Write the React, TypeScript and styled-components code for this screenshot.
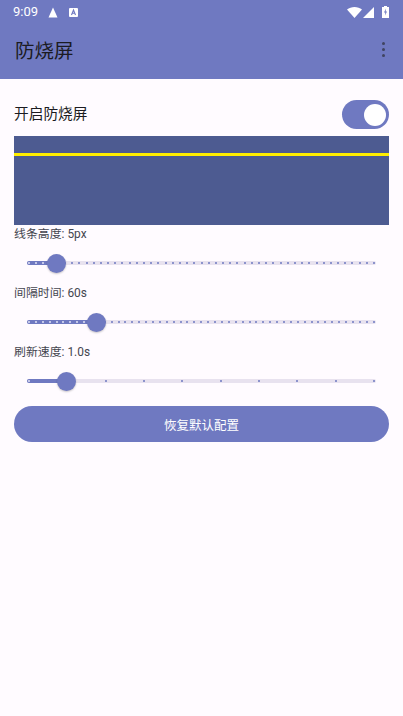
import React from 'react';
import styled, { createGlobalStyle } from 'styled-components';

const FONT = `Roboto, "Noto Sans CJK SC", sans-serif`;

const GlobalStyle = createGlobalStyle`
  html, body {
    margin: 0;
    padding: 0;
    background: #fffbff;
    font-family: ${FONT};
  }
  * { box-sizing: border-box; }
`;

const Page = styled.div`
  width: 403px;
  height: 716px;
  overflow: hidden;
  display: flex;
  flex-direction: column;
  background: #fffbff;
`;

const Header = styled.header`
  background: #6f79c1;
  height: 79px;
  flex-shrink: 0;
`;

const StatusBar = styled.div`
  height: 24px;
  padding: 0 14px 0 13px;
  display: flex;
  align-items: center;
`;

const Clock = styled.span`
  color: #fff;
  font-size: 13px;
  line-height: 24px;
  margin-right: 10px;
`;

const StatusLeft = styled.div`
  display: flex;
  align-items: center;
  gap: 11px;
  flex: 1;
`;

const StatusRight = styled.div`
  display: flex;
  align-items: center;
  gap: 1px;
`;

const AppBar = styled.div`
  height: 51px;
  padding: 0 15px;
  display: flex;
  align-items: center;
  justify-content: space-between;
`;

const Title = styled.h1`
  margin: 0;
  font-size: 19.5px;
  font-weight: 400;
  color: #1b1b21;
`;

const MenuDots = styled.div`
  display: flex;
  flex-direction: column;
  gap: 2.5px;
  margin-right: 3px;
`;

const Dot = styled.span`
  width: 3.5px;
  height: 3.5px;
  border-radius: 50%;
  background: #3f4460;
`;

const Content = styled.main`
  padding: 21px 14px 0;
  display: flex;
  flex-direction: column;
`;

const SwitchRow = styled.div`
  display: flex;
  align-items: center;
  justify-content: space-between;
  height: 29px;
`;

const SwitchLabel = styled.span`
  font-size: 14.7px;
  line-height: 28px;
  height: 28px;
  align-self: flex-start;
  color: #1b1b21;
`;

const Toggle = styled.div`
  width: 47px;
  height: 29px;
  border-radius: 15px;
  background: #6f79c1;
  display: flex;
  align-items: center;
  justify-content: flex-end;
  padding-right: 3px;
`;

const ToggleKnob = styled.div`
  width: 22px;
  height: 22px;
  border-radius: 50%;
  background: #fff;
`;

const Preview = styled.div`
  margin-top: 7px;
  height: 89px;
  padding-top: 17px;
  background: #4d5b91;
`;

const BurnLine = styled.div`
  height: 3px;
  background: #ffee00;
`;

const SliderLabel = styled.div`
  font-size: 11.9px;
  height: 17px;
  line-height: 19px;
  color: #44464f;
`;

const SliderBox = styled.div`
  height: 42px;
  margin: 0 13px;
  display: flex;
  align-items: center;
  position: relative;
`;

const Track = styled.div`
  width: 100%;
  height: 4px;
  border-radius: 2px;
  background: #e8e2ef;
  overflow: hidden;
`;

const TrackFill = styled.div`
  height: 100%;
  background: #6f79c1;
`;

const Ticks = styled.div`
  position: absolute;
  left: 1px;
  right: 1px;
  top: 50%;
  height: 2px;
  margin-top: -1px;
  display: flex;
  justify-content: space-between;
  align-items: center;
`;

const Tick = styled.span<{ $on: boolean }>`
  width: 2px;
  height: 2px;
  border-radius: 50%;
  background: ${(p) => (p.$on ? '#dfe2f5' : '#6f79c1')};
`;

const Thumb = styled.div`
  position: absolute;
  top: 50%;
  width: 19px;
  height: 19px;
  margin: -9.5px 0 0 -9.5px;
  border-radius: 50%;
  background: #6f79c1;
  box-shadow: 0 1px 2px rgba(0, 0, 0, 0.22);
`;

const ResetButton = styled.button`
  margin-top: 4px;
  height: 36px;
  border: 0;
  border-radius: 18px;
  background: #6f79c1;
  color: #fff;
  font-family: ${FONT};
  font-size: 12.5px;
`;

const StatusIcons = {
  Triangle: () => (
    <svg width="10" height="11" viewBox="0 0 10 11"><path d="M5 0.5 L9.5 10.5 H0.5 Z" fill="#fff" /></svg>
  ),
  Badge: () => (
    <svg width="9" height="9" viewBox="0 0 9 9">
      <rect width="9" height="9" rx="1" fill="#fff" />
      <path d="M2.5 7 L4.5 2 L6.5 7 M3.3 5.3 H5.7" stroke="#6f79c1" strokeWidth="1.1" fill="none" />
    </svg>
  ),
  Wifi: () => (
    <svg width="15" height="11" viewBox="0 0 15 11"><path d="M0 2.6 C4 -0.8 11 -0.8 15 2.6 L7.5 11 Z" fill="#fff" /></svg>
  ),
  Signal: () => (
    <svg width="11" height="11" viewBox="0 0 11 11"><path d="M11 0 V11 H0 Z" fill="#fff" /></svg>
  ),
  Battery: () => (
    <svg width="7" height="12" viewBox="0 0 7 12" style={{ marginLeft: 7 }}>
      <path d="M2 0 H5 V1 H7 V12 H0 V1 H2 Z" fill="#fff" />
      <path d="M4 2.5 L2 6.5 H3.3 L3 9.5 L5 5.5 H3.7 Z" fill="#6f79c1" />
    </svg>
  ),
};

interface SliderProps {
  label: string;
  value: number;
  ticks: number;
}

const Slider = ({ label, value, ticks }: SliderProps) => {
  const marks = Array.from({ length: ticks }, (_, i) => i / (ticks - 1));
  return (
    <>
      <SliderLabel>{label}</SliderLabel>
      <SliderBox>
        <Track>
          <TrackFill style={{ width: `${value * 100}%` }} />
        </Track>
        <Ticks>
          {marks.map((m) => (
            <Tick key={m} $on={m < value} />
          ))}
        </Ticks>
        <Thumb style={{ left: `${value * 100}%` }} />
      </SliderBox>
    </>
  );
};

export default function App() {
  return (
    <Page>
      <GlobalStyle />
      <Header>
        <StatusBar>
          <Clock>9:09</Clock>
          <StatusLeft>
            <StatusIcons.Triangle />
            <StatusIcons.Badge />
          </StatusLeft>
          <StatusRight>
            <StatusIcons.Wifi />
            <StatusIcons.Signal />
            <StatusIcons.Battery />
          </StatusRight>
        </StatusBar>
        <AppBar>
          <Title>防烧屏</Title>
          <MenuDots>
            <Dot />
            <Dot />
            <Dot />
          </MenuDots>
        </AppBar>
      </Header>
      <Content>
        <SwitchRow>
          <SwitchLabel>开启防烧屏</SwitchLabel>
          <Toggle>
            <ToggleKnob />
          </Toggle>
        </SwitchRow>
        <Preview>
          <BurnLine />
        </Preview>
        <Slider label="线条高度: 5px" value={0.084} ticks={49} />
        <Slider label="间隔时间: 60s" value={0.2} ticks={51} />
        <Slider label="刷新速度: 1.0s" value={0.114} ticks={10} />
        <ResetButton>恢复默认配置</ResetButton>
      </Content>
    </Page>
  );
}
